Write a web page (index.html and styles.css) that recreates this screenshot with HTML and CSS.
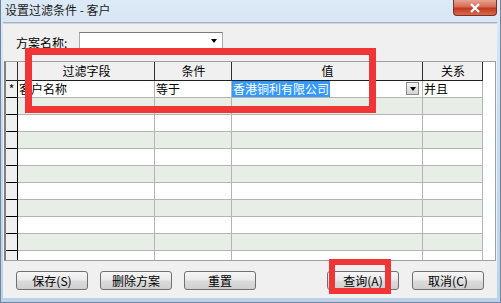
FILE: index.html
```html
<!DOCTYPE html>
<html lang="zh-CN">
<head>
    <meta charset="UTF-8">
    <title>设置过滤条件 - 客户</title>
    <link rel="stylesheet" href="styles.css">
</head>
<body>
    <div class="window">
        <div class="titlebar">
            <span class="title">设置过滤条件 - 客户</span>
            <span class="close-btn">
                <svg width="14" height="10" viewBox="0 0 14 10">
                    <path d="M3 1 L11 9 M11 1 L3 9" stroke="#fff" stroke-width="2.4" fill="none"/>
                </svg>
            </span>
        </div>
        <div class="client">
            <div class="scheme">
                <span class="scheme-label">方案名称:</span>
                <div class="combo"><span class="combo-arrow"></span></div>
            </div>
            <div class="grid">
                <div class="row head">
                    <div class="cell rh"></div>
                    <div class="cell">过滤字段</div>
                    <div class="cell">条件</div>
                    <div class="cell">值</div>
                    <div class="cell">关系</div>
                    <div class="fill"></div>
                </div>
                <div class="row">
                    <div class="cell rh">*</div>
                    <div class="cell">客户名称</div>
                    <div class="cell">等于</div>
                    <div class="cell value-cell">
                        <span class="selected">香港铜利有限公司</span>
                        <span class="drop"><span class="drop-arrow"></span></span>
                    </div>
                    <div class="cell">并且</div>
                    <div class="fill"></div>
                </div>
                <div class="row alt"><div class="cell rh"></div><div class="cell"></div><div class="cell"></div><div class="cell"></div><div class="cell"></div><div class="fill"></div></div>
                <div class="row"><div class="cell rh"></div><div class="cell"></div><div class="cell"></div><div class="cell"></div><div class="cell"></div><div class="fill"></div></div>
                <div class="row alt"><div class="cell rh"></div><div class="cell"></div><div class="cell"></div><div class="cell"></div><div class="cell"></div><div class="fill"></div></div>
                <div class="row"><div class="cell rh"></div><div class="cell"></div><div class="cell"></div><div class="cell"></div><div class="cell"></div><div class="fill"></div></div>
                <div class="row alt"><div class="cell rh"></div><div class="cell"></div><div class="cell"></div><div class="cell"></div><div class="cell"></div><div class="fill"></div></div>
                <div class="row"><div class="cell rh"></div><div class="cell"></div><div class="cell"></div><div class="cell"></div><div class="cell"></div><div class="fill"></div></div>
                <div class="row alt"><div class="cell rh"></div><div class="cell"></div><div class="cell"></div><div class="cell"></div><div class="cell"></div><div class="fill"></div></div>
                <div class="row"><div class="cell rh"></div><div class="cell"></div><div class="cell"></div><div class="cell"></div><div class="cell"></div><div class="fill"></div></div>
                <div class="row alt"><div class="cell rh"></div><div class="cell"></div><div class="cell"></div><div class="cell"></div><div class="cell"></div><div class="fill"></div></div>
                <div class="row"><div class="cell rh"></div><div class="cell"></div><div class="cell"></div><div class="cell"></div><div class="cell"></div><div class="fill"></div></div>
            </div>
            <div class="actions">
                <button class="btn">保存(S)</button>
                <button class="btn">删除方案</button>
                <button class="btn">重置</button>
                <button class="btn btn-query">查询(A)</button>
                <button class="btn">取消(C)</button>
            </div>
        </div>
        <!-- red annotation boxes drawn over the dialog -->
        <div class="mark mark-grid"></div>
        <div class="mark mark-query"></div>
    </div>
</body>
</html>
```

FILE: styles.css
```css
body {
    margin: 0;
    padding: 0;
    font-family: "Noto Sans CJK SC", "Liberation Sans", sans-serif;
    font-size: 12px;
    color: #000;
    overflow: hidden;
}

.window {
    position: relative;
    width: 501px;
    height: 303px;
    box-sizing: border-box;
    background: linear-gradient(to bottom, #dce9f6 0%, #c9dcf0 40%, #bcd2ea 100%);
    border-left: 1px solid #6f86a3;
    border-right: 1px solid #6f86a3;
    border-bottom: 1px solid #6f86a3;
    display: flex;
    flex-direction: column;
}

.titlebar {
    height: 22px;
    display: flex;
    justify-content: space-between;
    align-items: flex-start;
}

.title {
    margin: 2px 0 0 4px;
    line-height: 16px;
    font-size: 12px;
    color: #1a1a1a;
}

.close-btn {
    width: 44px;
    height: 16px;
    margin-right: 3px;
    box-sizing: border-box;
    border: 1px solid #7a3022;
    border-top: none;
    border-radius: 0 0 4px 4px;
    background: linear-gradient(to bottom, #e6a591 0%, #d66b55 45%, #c1391f 55%, #d9694c 100%);
    display: flex;
    align-items: center;
    justify-content: center;
}

.client {
    flex: 1;
    margin: 0 3px 4px 2px;
    background: #f0f0f0;
    border-top: 1px solid #9fb2c8;
    display: flex;
    flex-direction: column;
}

.scheme {
    height: 38px;
    box-sizing: border-box;
    border-top: 1px solid #d5d5d5;
    padding: 8px 0 0 13px;
    display: flex;
    align-items: flex-start;
}

.scheme-label {
    margin-top: 3px;
    line-height: 16px;
    width: 63px;
}

.combo {
    width: 144px;
    height: 18px;
    box-sizing: border-box;
    background: #fff;
    border: 1px solid #a9a9a9;
    border-top-color: #7a7a7a;
    position: relative;
}

.combo-arrow {
    position: absolute;
    right: 5px;
    top: 6px;
    border-left: 3px solid transparent;
    border-right: 3px solid transparent;
    border-top: 4px solid #000;
}

.grid {
    margin: 0 1px 0 1px;
    height: 198px;
    overflow: hidden;
    background: #fff;
    border: 1px solid #a0a0a0;
    border-left: 2px solid #808080;
}

.row {
    display: grid;
    grid-template-columns: 12px 137px 77px 191px 60px 1fr;
    height: 17px;
}

.row.head {
    height: 19px;
}

.cell {
    box-sizing: border-box;
    border-right: 1px solid #b4b4b4;
    border-bottom: 1px solid #b4b4b4;
    line-height: 16px;
    padding-left: 1px;
    white-space: nowrap;
    overflow: hidden;
}

.row.alt .cell {
    background: #e6eee6;
}

.row.head .cell {
    background: #f0f0f0;
    text-align: center;
    border-right-color: #303030;
    border-bottom-color: #202020;
    line-height: 18px;
}

.cell.rh,
.row.alt .cell.rh {
    background: #f0f0f0;
    border-right: 1px solid #000;
    border-bottom: 1px solid #000;
    padding-left: 0;
    text-align: center;
}

.fill {
    background: #fff;
}

.value-cell {
    position: relative;
    padding-left: 0;
}

.selected {
    background: #3399ff;
    color: #fff;
    padding: 0 1px;
}

.drop {
    position: absolute;
    right: 3px;
    top: 1px;
    width: 13px;
    height: 13px;
    box-sizing: border-box;
    border: 1px solid #8a8a8a;
    background: linear-gradient(to bottom, #f4f4f4, #d4d4d4);
}

.drop-arrow {
    position: absolute;
    left: 3px;
    top: 4px;
    border-left: 3px solid transparent;
    border-right: 3px solid transparent;
    border-top: 4px solid #000;
}

.actions {
    display: flex;
    padding: 10px 13px 0 13px;
    gap: 12px;
}

.btn {
    width: 72px;
    height: 19px;
    padding: 0;
    font-family: inherit;
    font-size: 12px;
    line-height: 16px;
    color: #000;
    border: 1px solid #707070;
    border-radius: 3px;
    background: linear-gradient(to bottom, #f6f6f6 0%, #e9e9e9 48%, #dcdcdc 52%, #cfcfcf 100%);
}

.btn-query {
    margin-left: auto;
    margin-right: 1px;
}

.mark {
    position: absolute;
    box-sizing: border-box;
    border: 7px solid #ef3535;
}

.mark-grid {
    left: 24px;
    top: 48px;
    width: 351px;
    height: 65px;
}

.mark-query {
    left: 328px;
    top: 259px;
    width: 62px;
    height: 35px;
    border-width: 6px;
}
```
